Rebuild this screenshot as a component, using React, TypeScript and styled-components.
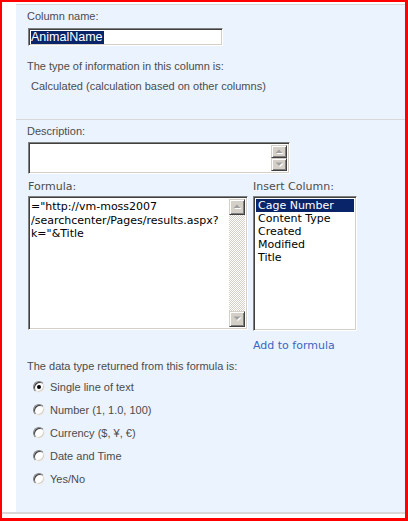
import React from "react";
import styled, { createGlobalStyle } from "styled-components";

const Global = createGlobalStyle`
  html, body { margin: 0; padding: 0; background: #fff; }
  * { box-sizing: border-box; }
`;

const tahoma = `"Liberation Sans", Arial, sans-serif`;
const verdana = `"DejaVu Sans", Verdana, sans-serif`;

const Frame = styled.div`
  width: 408px;
  height: 521px;
  border-style: solid;
  border-color: #ff0000;
  border-width: 2px 3px 3px 2px;
  background: #fff;
  padding: 2px 0 4px 0;
  display: flex;
  flex-direction: column;
`;

const Body = styled.div`
  flex: 1;
  display: flex;
  padding-left: 14px;
`;

const Panels = styled.div`
  flex: 1;
  display: flex;
  flex-direction: column;
  border-top: 1px solid #d8d8d8;
`;

const BottomRule = styled.div`
  height: 2px;
  background: #d8d8d8;
`;

const Section = styled.div<{ $grow?: boolean; $divider?: boolean }>`
  background: #ebf3ff;
  padding: 5px 0 0 11px;
  display: flex;
  flex-direction: column;
  ${(p) => (p.$grow ? "flex: 1;" : "height: 115px;")}
  ${(p) => (p.$divider ? "border-bottom: 1px solid #d8d8d8;" : "")}
`;

const Label = styled.div<{ $mt?: number; $indent?: number }>`
  font-family: ${tahoma};
  font-size: 11px;
  line-height: 13px;
  color: #4c4c4c;
  margin-top: ${(p) => p.$mt ?? 0}px;
  padding-left: ${(p) => p.$indent ?? 0}px;
  white-space: nowrap;
`;

const VLabel = styled.div`
  font-family: ${verdana};
  font-size: 11px;
  line-height: 13px;
  color: #4c4c4c;
  white-space: nowrap;
`;

const Inset = styled.div<{ $w: number; $h: number }>`
  width: ${(p) => p.$w}px;
  height: ${(p) => p.$h}px;
  background: #fff;
  border: 1px solid;
  border-color: #808080 #ffffff #ffffff #808080;
  box-shadow: inset 1px 1px 0 #404040, inset -1px -1px 0 #d4d0c8;
`;

const TextInput = styled(Inset)`
  margin: 5px 0 0 1px;
  padding: 2px 0 0 2px;
  display: flex;
  align-items: flex-start;
`;

const Selected = styled.span`
  background: #0a246a;
  color: #fff;
  font-family: ${tahoma};
  font-size: 12.5px;
  line-height: 13px;
  padding: 0 1px 0 0;
`;

const AreaBox = styled(Inset)`
  display: flex;
  padding: 2px 2px 2px 2px;
`;

const AreaText = styled.div`
  flex: 1;
  font-family: ${verdana};
  font-size: 11px;
  line-height: 13.5px;
  color: #000;
  padding: 1px 0 0 0;
  white-space: pre;
  overflow: hidden;
`;

const Scroll = styled.div`
  width: 16px;
  display: flex;
  flex-direction: column;
  justify-content: space-between;
  background: repeating-conic-gradient(#d4d0c8 0 25%, #ffffff 0 50%) 0 0 / 2px 2px;
`;

const ScrollBtn = styled.div<{ $h: number }>`
  width: 16px;
  height: ${(p) => p.$h}px;
  background: #d4d0c8;
  border: 1px solid;
  border-color: #d4d0c8 #404040 #404040 #d4d0c8;
  box-shadow: inset 1px 1px 0 #fff, inset -1px -1px 0 #808080;
  display: flex;
  align-items: center;
  justify-content: center;
`;

const Arrow = ({ down }: { down?: boolean }) => (
  <svg width="9" height="6" viewBox="0 0 9 6">
    {down ? (
      <>
        <polygon points="1.5,1.5 8.5,1.5 5,5" fill="#fff" />
        <polygon points="0.5,0.5 7.5,0.5 4,4" fill="#a0a0a0" />
      </>
    ) : (
      <>
        <polygon points="1.5,5 8.5,5 5,1.5" fill="#fff" />
        <polygon points="0.5,4 7.5,4 4,0.5" fill="#a0a0a0" />
      </>
    )}
  </svg>
);

const Desc = styled(AreaBox)`
  margin: 4px 0 0 1px;
`;

const Columns = styled.div`
  display: flex;
  gap: 5px;
  margin: 6px 0 0 1px;
`;

const Col = styled.div`
  display: flex;
  flex-direction: column;
  gap: 3px;
`;

const ListBox = styled(Inset)`
  padding: 2px;
  display: flex;
  flex-direction: column;
`;

const ListItem = styled.div<{ $sel?: boolean }>`
  font-family: ${verdana};
  font-size: 11px;
  line-height: 13px;
  height: 13px;
  padding-left: 2px;
  color: ${(p) => (p.$sel ? "#fff" : "#000")};
  background: ${(p) => (p.$sel ? "#0a246a" : "transparent")};
  white-space: nowrap;
`;

const Link = styled.a`
  font-family: ${verdana};
  font-size: 11px;
  line-height: 13px;
  color: #3966bf;
  text-decoration: none;
  margin-top: 5px;
`;

const Radios = styled.div`
  display: flex;
  flex-direction: column;
  gap: 10px;
  margin: 7px 0 0 6px;
`;

const RadioRow = styled.label`
  display: flex;
  align-items: center;
  gap: 5px;
  height: 13px;
  font-family: ${tahoma};
  font-size: 11px;
  color: #4c4c4c;
  white-space: nowrap;
`;

const Radio = styled.span<{ $on?: boolean }>`
  position: relative;
  width: 12px;
  height: 12px;
  border-radius: 50%;
  background: #fff;
  border: 1px solid;
  border-color: #808080 #ececec #ececec #808080;
  box-shadow: inset 1px 1px 0 #404040, inset -1px -1px 0 #d4d0c8;
  &::after {
    content: "";
    display: ${(p) => (p.$on ? "block" : "none")};
    position: absolute;
    left: 3px;
    top: 3px;
    width: 4px;
    height: 4px;
    border-radius: 50%;
    background: #000;
  }
`;

const columns = ["Cage Number", "Content Type", "Created", "Modified", "Title"];
const types = [
  "Single line of text",
  "Number (1, 1.0, 100)",
  "Currency ($, ¥, €)",
  "Date and Time",
  "Yes/No",
];

export default function App() {
  return (
    <>
      <Global />
      <Frame>
        <Body>
          <Panels>
            <Section $divider>
              <Label>Column name:</Label>
              <TextInput $w={195} $h={18}>
                <Selected>AnimalName</Selected>
              </TextInput>
              <Label $mt={14}>The type of information in this column is:</Label>
              <Label $mt={7} $indent={4}>
                Calculated (calculation based on other columns)
              </Label>
            </Section>
            <Section $grow>
              <Label>Description:</Label>
              <Desc $w={262} $h={32}>
                <AreaText />
                <Scroll>
                  <ScrollBtn $h={14}>
                    <Arrow />
                  </ScrollBtn>
                  <ScrollBtn $h={14}>
                    <Arrow down />
                  </ScrollBtn>
                </Scroll>
              </Desc>
              <Columns>
                <Col>
                  <VLabel>Formula:</VLabel>
                  <AreaBox $w={220} $h={134}>
                    <AreaText>
                      {'="http://vm-moss2007\n/searchcenter/Pages/results.aspx?\nk="&Title'}
                    </AreaText>
                    <Scroll>
                      <ScrollBtn $h={16}>
                        <Arrow />
                      </ScrollBtn>
                      <ScrollBtn $h={16}>
                        <Arrow down />
                      </ScrollBtn>
                    </Scroll>
                  </AreaBox>
                </Col>
                <Col>
                  <VLabel>Insert Column:</VLabel>
                  <ListBox $w={104} $h={135}>
                    {columns.map((c, i) => (
                      <ListItem key={c} $sel={i === 0}>
                        {c}
                      </ListItem>
                    ))}
                  </ListBox>
                  <Link href="#">Add to formula</Link>
                </Col>
              </Columns>
              <Label $mt={8}>The data type returned from this formula is:</Label>
              <Radios>
                {types.map((t, i) => (
                  <RadioRow key={t}>
                    <Radio $on={i === 0} />
                    {t}
                  </RadioRow>
                ))}
              </Radios>
            </Section>
          </Panels>
        </Body>
        <BottomRule />
      </Frame>
    </>
  );
}
